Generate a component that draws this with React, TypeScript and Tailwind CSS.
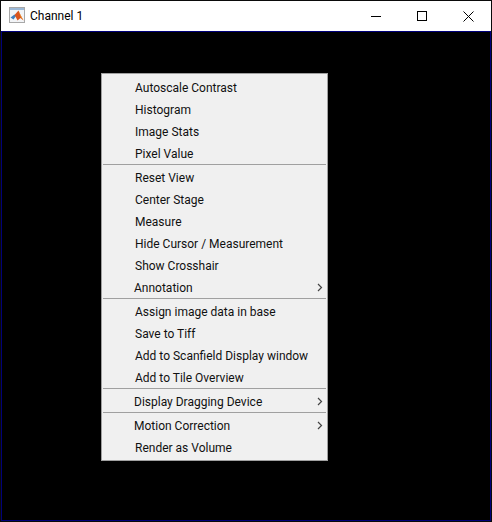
const font = { fontFamily: 'Roboto, sans-serif' };

type Item = { label: string; sub?: boolean };

const groups: Item[][] = [
  [{ label: "Autoscale Contrast" }, { label: "Histogram" }, { label: "Image Stats" }, { label: "Pixel Value" }],
  [
    { label: "Reset View" },
    { label: "Center Stage" },
    { label: "Measure" },
    { label: "Hide Cursor / Measurement" },
    { label: "Show Crosshair" },
    { label: "Annotation", sub: true },
  ],
  [
    { label: "Assign image data in base" },
    { label: "Save to Tiff" },
    { label: "Add to Scanfield Display window" },
    { label: "Add to Tile Overview" },
  ],
  [{ label: "Display Dragging Device", sub: true }],
  [{ label: "Motion Correction", sub: true }, { label: "Render as Volume" }],
];

function MatlabIcon() {
  return (
    <svg width="16" height="16" viewBox="0 0 16 16" className="block">
      <rect x="0.5" y="0.5" width="15" height="15" fill="#f2f4f7" stroke="#a8a8a8" />
      <rect x="1" y="1" width="14" height="2" fill="#9dbad8" />
      <path d="M1.5 10.5 L5.5 7.5 L7 9 L4.5 12.5 Z" fill="#3f7fbf" />
      <path d="M5.5 8 L9.5 3.5 L11.5 8 L14.5 13.5 L11.5 11 L8.5 13.5 L6.5 9.5 Z" fill="#d9541e" />
      <path d="M9.5 3.5 L11.5 8 L14.5 13.5 L12 10.5 L10.5 6.5 Z" fill="#f0a030" />
    </svg>
  );
}

function MenuRow({ item }: { item: Item }) {
  return (
    <div className={`relative flex h-[22px] items-center pt-[2px] text-[12px] leading-none text-[#111] ${item.sub ? "pl-[32px]" : "pl-[33px]"}`}>
      <span>{item.label}</span>
      {item.sub && (
        <svg width="6" height="9" viewBox="0 0 6 9" className="absolute right-[4px] top-[7px]">
          <path d="M1 1 L4.5 4.5 L1 8" fill="none" stroke="#444" strokeWidth="1.2" />
        </svg>
      )}
    </div>
  );
}

export default function App() {
  return (
    <div className="flex h-[522px] w-[492px] flex-col overflow-hidden bg-[#0a0a0a] p-px" style={font}>
      <div className="flex h-[30px] shrink-0 items-center bg-white">
        <div className="mb-[3px] ml-[8px] mr-[5px]">
          <MatlabIcon />
        </div>
        <span className="text-[12px] text-black">Channel 1</span>
        <div className="ml-auto flex h-full items-center">
          <div className="flex h-full w-[46px] items-center justify-center">
            <div className="h-px w-[10px] bg-black" />
          </div>
          <div className="flex h-full w-[46px] items-center justify-center">
            <div className="h-[10px] w-[10px] border border-black" />
          </div>
          <div className="flex h-full w-[46px] items-center justify-center">
            <svg width="11" height="11" viewBox="0 0 11 11">
              <path d="M0.5 0.5 L10.5 10.5 M10.5 0.5 L0.5 10.5" stroke="#000" strokeWidth="1" />
            </svg>
          </div>
        </div>
      </div>
      <div className="min-h-0 flex-1 border border-[#00007a] bg-black">
        <div className="ml-[99px] mt-[41px] w-[227px] border border-[#a0a0a0] bg-[#f0f0f0] pb-[2px] pt-[2px]">
          {groups.map((group, i) => (
            <div key={i}>
              {i > 0 && <div className="mx-px h-[2px] border-t border-[#a0a0a0] bg-[#f0f0f0]" />}
              {group.map((item) => (
                <MenuRow key={item.label} item={item} />
              ))}
            </div>
          ))}
        </div>
      </div>
    </div>
  );
}
